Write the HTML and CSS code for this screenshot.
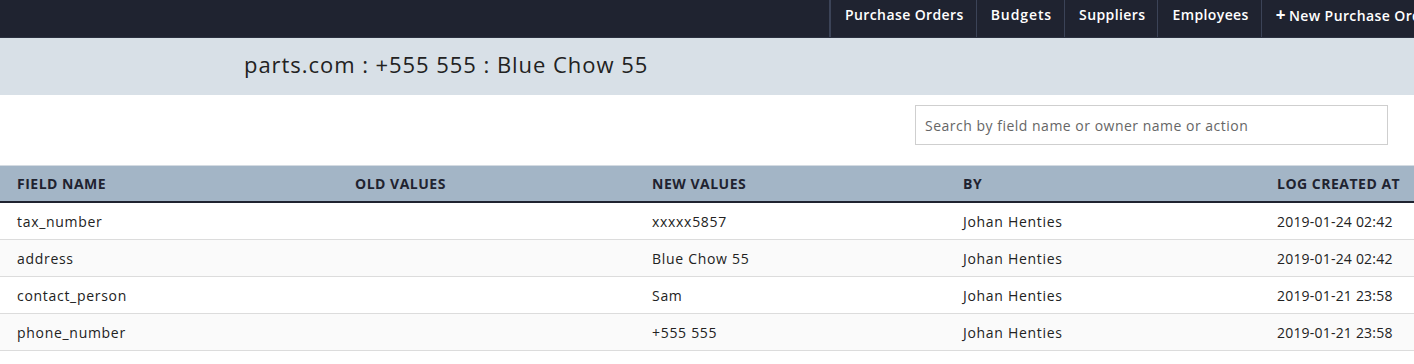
FILE: index.html
```html
<!DOCTYPE html>
<html>
<head>
<meta charset="utf-8">
<link rel="stylesheet" href="styles.css">
</head>
<body>
<nav class="topbar">
  <ul class="nav">
    <li><a>Purchase Orders</a></li>
    <li><a class="wide">Budgets</a></li>
    <li><a>Suppliers</a></li>
    <li><a>Employees</a></li>
    <li><a><span class="plus">+</span>New Purchase Order</a></li>
  </ul>
</nav>
<header class="band">
  <h1 class="title">parts.com : +555 555 : Blue Chow 55</h1>
</header>
<div class="toolbar">
  <input class="search" type="text" placeholder="Search by field name or owner name or action">
</div>
<table class="log">
  <thead>
    <tr>
      <th class="c1">Field Name</th>
      <th class="c2">Old Values</th>
      <th class="c3">New Values</th>
      <th class="c4">By</th>
      <th class="c5">Log Created At</th>
    </tr>
  </thead>
  <tbody>
    <tr><td>tax_number</td><td></td><td>xxxxx5857</td><td>Johan Henties</td><td class="date">2019-01-24 02:42</td></tr>
    <tr><td>address</td><td></td><td>Blue Chow 55</td><td>Johan Henties</td><td class="date">2019-01-24 02:42</td></tr>
    <tr><td>contact_person</td><td></td><td>Sam</td><td>Johan Henties</td><td class="date">2019-01-21 23:58</td></tr>
    <tr><td>phone_number</td><td></td><td>+555 555</td><td>Johan Henties</td><td class="date">2019-01-21 23:58</td></tr>
  </tbody>
</table>
</body>
</html>
```

FILE: styles.css
```css
html, body {
  margin: 0;
  padding: 0;
  background: #fff;
  font-family: "Open Sans", "Noto Sans", sans-serif;
  color: #222;
  overflow: hidden;
}
.topbar {
  height: 37px;
  background: #1f2330;
  display: flex;
  padding-left: 829px;
  border-bottom: 1px solid #2b3140;
}
.nav {
  list-style: none;
  margin: 0;
  padding: 0;
  display: flex;
  border-left: 2px solid #3b4357;
  white-space: nowrap;
}
.nav li {
  display: flex;
  align-items: flex-start;
  border-right: 1px solid #3b4357;
}
.nav a {
  color: #fff;
  font-size: 14px;
  font-weight: 600;
  letter-spacing: 0.4px;
  padding: 0 12px 0 14px;
  line-height: 30px;
}
.nav a.wide {
  letter-spacing: 0.9px;
}
.plus {
  font-weight: 700;
  font-size: 17px;
  margin-right: 3px;
}
.band {
  background: #d8e0e7;
  height: 57px;
  box-sizing: border-box;
  padding: 0 0 5px 244px;
  display: flex;
  align-items: center;
}
.title {
  margin: 0;
  font-weight: 400;
  font-size: 22px;
  letter-spacing: 0.95px;
  color: #222;
}
.toolbar {
  display: flex;
  justify-content: flex-end;
  padding: 10px 26px 20px 0;
}
.search {
  width: 473px;
  height: 40px;
  box-sizing: border-box;
  border: 1px solid #cfcfcf;
  padding: 0 9px;
  font-family: inherit;
  font-size: 14px;
  letter-spacing: 0.5px;
  color: #444;
  outline: none;
}
.search::placeholder {
  color: #666;
}
.log {
  width: 1414px;
  border-collapse: collapse;
  table-layout: fixed;
  font-size: 14px;
  letter-spacing: 0.7px;
}
.log th {
  background: #a3b5c6;
  text-align: left;
  text-transform: uppercase;
  font-weight: 700;
  font-size: 14px;
  letter-spacing: 0.5px;
  white-space: nowrap;
  color: #1f2330;
  height: 35px;
  padding: 0 17px;
  border-top: 1px solid #d4dbe2;
  border-bottom: 2px solid #1f2330;
}
.log td {
  height: 36px;
  padding: 0 17px;
  border-bottom: 1px solid #dcdcdc;
  color: #222;
  white-space: nowrap;
}
.log td.date {
  letter-spacing: 0.2px;
}
.log tbody tr:nth-child(even) td {
  background: #fafafa;
}
.c1 { width: 304px; }
.c2 { width: 263px; }
.c3 { width: 277px; }
.c4 { width: 280px; }
.c5 { width: 120px; }
```
